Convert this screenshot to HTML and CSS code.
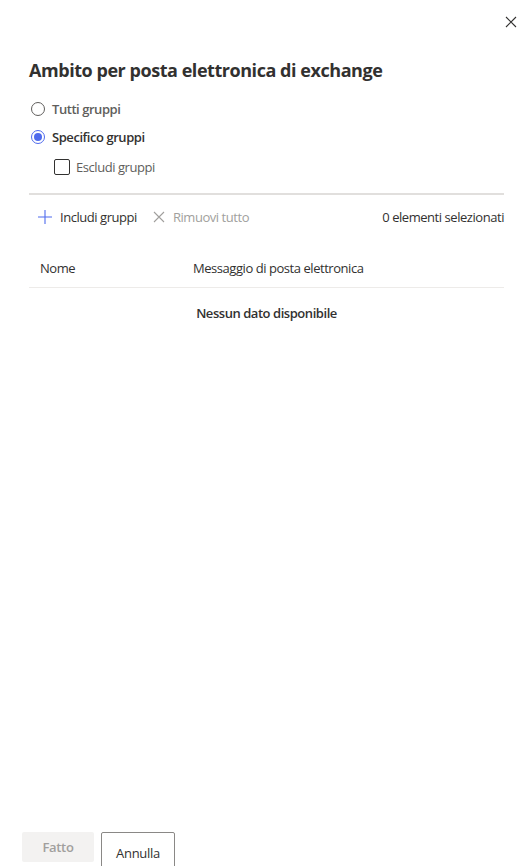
FILE: index.html
```html
<!DOCTYPE html>
<html>
<head>
    <link rel="stylesheet" href="styles.css">
</head>
<body>
    <div class="panel">
        <div class="panel-top">
            <button class="close" aria-label="Chiudi">
                <svg width="12" height="12" viewBox="0 0 12 12"><path d="M1 1L11 11M11 1L1 11" stroke="#323130" stroke-width="1.1"/></svg>
            </button>
        </div>

        <div class="content">
            <h1>Ambito per posta elettronica di exchange</h1>

            <div class="choices">
                <label class="radio">
                    <span class="dot"></span>
                    <span class="radio-text">Tutti gruppi</span>
                </label>
                <label class="radio checked">
                    <span class="dot"></span>
                    <span class="radio-text">Specifico gruppi</span>
                </label>
                <label class="check">
                    <span class="box"></span>
                    <span>Escludi gruppi</span>
                </label>
            </div>

            <div class="toolbar">
                <span class="tool">
                    <svg width="14" height="14" viewBox="0 0 14 14"><path d="M7 0V14M0 7H14" stroke="#4f6bed" stroke-width="1.1"/></svg>
                    Includi gruppi
                </span>
                <span class="tool disabled">
                    <svg width="12" height="12" viewBox="0 0 12 12"><path d="M1 1L11 11M11 1L1 11" stroke="#a19f9d" stroke-width="1.1"/></svg>
                    Rimuovi tutto
                </span>
                <span class="count">0 elementi selezionati</span>
            </div>

            <div class="grid">
                <div class="grid-head">
                    <span class="col-name">Nome</span>
                    <span class="col-mail">Messaggio di posta elettronica</span>
                </div>
                <div class="empty">Nessun dato disponibile</div>
            </div>
        </div>

        <div class="footer">
            <button class="btn primary" disabled>Fatto</button>
            <button class="btn">Annulla</button>
        </div>
    </div>
</body>
</html>
```

FILE: styles.css
```css
body {
    margin: 0;
    font-family: "Open Sans", "Noto Sans", sans-serif;
    color: #323130;
    background: #fff;
}
.panel {
    height: 866px;
    display: flex;
    flex-direction: column;
    overflow: hidden;
}
.panel-top {
    display: flex;
    justify-content: flex-end;
    padding: 16px 13px 0 0;
}
.close {
    border: 0;
    background: none;
    padding: 0;
    width: 12px;
    height: 12px;
    display: flex;
}
.content {
    flex: 1;
    padding: 0 26px 0 29px;
    font-size: 13px;
    letter-spacing: -0.45px;
}
h1 {
    font-size: 18px;
    font-weight: 700;
    margin: 30px 0 17px;
    letter-spacing: -0.45px;
}
.choices {
    display: flex;
    flex-direction: column;
    gap: 8px;
    padding-left: 2px;
}
.radio, .check {
    display: flex;
    align-items: center;
    height: 20px;
}
.radio .dot {
    width: 14px;
    height: 14px;
    border: 1px solid #605e5c;
    border-radius: 50%;
    margin-right: 7px;
    box-sizing: border-box;
    position: relative;
}
.radio.checked .dot {
    border-color: #4f6bed;
}
.radio.checked .dot::after {
    content: "";
    position: absolute;
    left: 2px;
    top: 2px;
    width: 8px;
    height: 8px;
    border-radius: 50%;
    background: #4f6bed;
}
.radio-text {
    font-weight: 600;
    color: #605e5c;
}
.radio.checked .radio-text {
    color: #323130;
}
.check {
    margin: 2px 0 0 23px;
    color: #605e5c;
}
.check .box {
    width: 16px;
    height: 16px;
    border: 1px solid #323130;
    border-radius: 2px;
    box-sizing: border-box;
    margin-right: 6px;
}
.toolbar {
    border-top: 2px solid #e1dfdd;
    margin-top: 16px;
    display: flex;
    align-items: center;
    height: 44px;
}
.tool {
    display: flex;
    align-items: center;
    gap: 8px;
    margin-left: 9px;
    margin-right: 7px;
}
.tool.disabled {
    color: #a19f9d;
}
.count {
    margin-left: auto;
}
.grid {
    margin-top: 10px;
}
.grid-head {
    display: flex;
    align-items: center;
    height: 38px;
    border-bottom: 1px solid #edebe9;
}
.col-name {
    width: 164px;
    padding-left: 11px;
    box-sizing: border-box;
}
.empty {
    text-align: center;
    font-weight: 600;
    padding-top: 16px;
}
.footer {
    display: flex;
    align-items: flex-start;
    gap: 7px;
    padding: 0 0 0 22px;
    height: 34px;
}
.btn {
    font-family: inherit;
    font-size: 13px;
    letter-spacing: -0.3px;
    height: 38px;
    min-width: 74px;
    padding: 4px 12px 0;
    border: 1px solid #8a8886;
    border-radius: 2px;
    background: #fff;
    color: #323130;
}
.btn.primary {
    height: 30px;
    min-width: 72px;
    padding-top: 0;
    border-color: transparent;
    background: #f3f2f1;
    color: #a19f9d;
    font-weight: 600;
}
```
